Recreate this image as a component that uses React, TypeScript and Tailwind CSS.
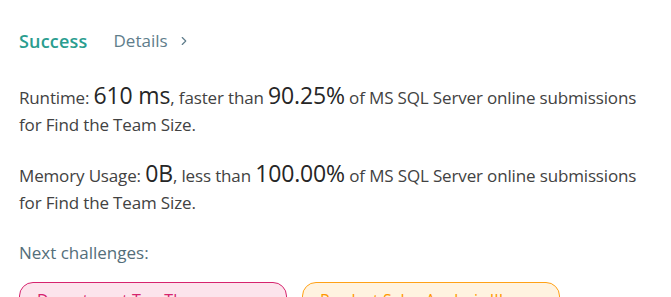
import { ChevronRight } from "lucide-react";

const font = { fontFamily: '"Open Sans", "Noto Sans", sans-serif' };

function StatLine({
  label,
  value,
  cmp,
  pct,
}: {
  label: string;
  value: string;
  cmp: string;
  pct: string;
}) {
  return (
    <p className="text-[17px] leading-[27px] tracking-[-0.15px] text-[#424242]">
      {label}: <span className="text-[23px] text-[#262626]">{value}</span>, {cmp}{" "}
      <span className="text-[23px] text-[#262626]">{pct}</span> of MS SQL Server online
      submissions for Find the Team Size.
    </p>
  );
}

export default function App() {
  return (
    <div className="h-[297px] overflow-hidden bg-white px-[19px] pt-[29px]" style={font}>
      <div className="flex h-[24px] items-center gap-[26px]">
        <span className="text-[18px] font-semibold tracking-[0.2px] text-[#2a9d8f]">Success</span>
        <span className="flex items-center gap-[9px] text-[17px] text-[#607d8b]">
          Details
          <ChevronRight size={14} strokeWidth={2} />
        </span>
      </div>

      <div className="mt-[29px] w-[628px]">
        <StatLine label="Runtime" value="610 ms" cmp="faster than" pct="90.25%" />
      </div>
      <div className="mt-[22px] w-[628px]">
        <StatLine label="Memory Usage" value="0B" cmp="less than" pct="100.00%" />
      </div>

      <p className="mt-[25px] text-[17px] leading-[24px] text-[#546e7a]">Next challenges:</p>

      <div className="mt-[17px] flex gap-[15px]">
        <span className="w-[268px] rounded-[14px] border border-[#d6246e] bg-[#fce4ec] px-[17px] py-[5px] text-[16px] text-[#d6246e]">
          Department Top Three Salaries
        </span>
        <span className="w-[258px] rounded-[14px] border border-[#ffa116] bg-[#fff3e0] px-[17px] py-[5px] text-[16px] text-[#ff9800]">
          Product Sales Analysis III
        </span>
      </div>
    </div>
  );
}
